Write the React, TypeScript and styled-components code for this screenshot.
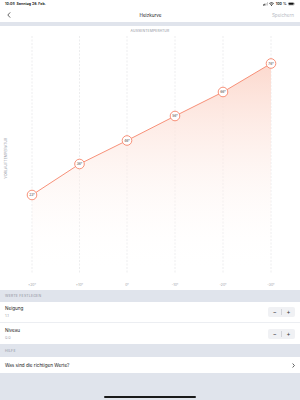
import React from 'react';
import styled, { createGlobalStyle } from 'styled-components';

const GlobalStyle = createGlobalStyle`
  html, body {
    margin: 0;
    padding: 0;
    background: #ffffff;
  }
  body {
    font-family: Inter, "Noto Sans", "Liberation Sans", sans-serif;
    color: #1f2024;
  }
`;

const GREY = '#e0e4ec';
const ACCENT = '#f6846a';

const Screen = styled.div`
  width: 300px;
  height: 400px;
  display: flex;
  flex-direction: column;
  background: #ffffff;
  overflow: hidden;
`;

const StatusBar = styled.div`
  height: 8px;
  padding: 0 5px;
  display: flex;
  align-items: center;
  justify-content: space-between;
  font-size: 3.6px;
  font-weight: 600;
  color: #111;
`;

const StatusRight = styled.div`
  display: flex;
  align-items: center;
  gap: 1.5px;
`;

const NavBar = styled.div`
  height: 14px;
  display: grid;
  grid-template-columns: 1fr auto 1fr;
  align-items: center;
  padding: 0 6px 0 7px;
`;

const NavTitle = styled.div`
  font-size: 4.6px;
  color: #222;
`;

const SaveButton = styled.div`
  justify-self: end;
  font-size: 4.6px;
  color: #b9bcc4;
`;

const Band = styled.div<{ $h: number }>`
  height: ${(p) => p.$h}px;
  background: ${GREY};
  flex-shrink: 0;
`;

const ChartPanel = styled.div`
  height: 264px;
  flex-shrink: 0;
`;

const SectionHeader = styled.div<{ $h: number }>`
  height: ${(p) => p.$h}px;
  background: ${GREY};
  display: flex;
  align-items: center;
  padding-left: 5px;
  font-size: 3.5px;
  letter-spacing: 0.2px;
  color: #8d919b;
`;

const ValueRow = styled.div<{ $divider?: boolean }>`
  height: 21px;
  display: flex;
  align-items: center;
  justify-content: space-between;
  padding: 0 5px;
  border-bottom: ${(p) => (p.$divider ? '0.5px solid #eceef2' : 'none')};
  box-sizing: border-box;
`;

const RowLabel = styled.div`
  display: flex;
  flex-direction: column;
  gap: 2px;
  .name {
    font-size: 4.6px;
    color: #222;
  }
  .value {
    font-size: 3.8px;
    color: #a3a6ae;
  }
`;

const Stepper = styled.div`
  width: 27px;
  height: 10px;
  border-radius: 2px;
  background: #f0f1f4;
  display: flex;
  align-items: center;
  font-size: 6px;
  color: #333;
  span {
    flex: 1;
    text-align: center;
    line-height: 10px;
  }
  i {
    width: 0.5px;
    height: 6px;
    background: #d2d4da;
  }
`;

const LinkRow = styled.div`
  height: 16px;
  display: flex;
  align-items: center;
  justify-content: space-between;
  padding: 0 5px;
  font-size: 4.6px;
  color: #222;
`;

const Footer = styled.div`
  flex: 1;
  background: ${GREY};
  display: flex;
  align-items: flex-end;
  justify-content: center;
  padding-bottom: 2px;
`;

const HomeIndicator = styled.div`
  width: 92px;
  height: 2px;
  border-radius: 1px;
  background: #1a1a1a;
`;

const xs = [32, 79.5, 127, 175, 223, 271];
const temps = [23, 36, 46, 56, 66, 76];
const ys = [169, 138, 114.5, 90, 66, 37.5];
const xLabels = ['+20°', '+10°', '0°', '-10°', '-20°', '-30°'];

const HeatCurve: React.FC = () => {
  const line = xs.map((x, i) => `${x},${ys[i]}`).join(' ');
  const area = `${xs[0]},247 ${line} ${xs[5]},247`;
  return (
    <svg width="300" height="264" viewBox="0 0 300 264">
      <defs>
        <linearGradient id="fill" x1="0" y1="0" x2="0" y2="1">
          <stop offset="0" stopColor="#fcd9ce" />
          <stop offset="1" stopColor="#ffffff" stopOpacity="0" />
        </linearGradient>
      </defs>
      <text x="150" y="6" textAnchor="middle" fontSize="3.4" fill="#8d919b" letterSpacing="0.15">
        AUSSENTEMPERATUR
      </text>
      {xs.map((x) => (
        <line key={x} x1={x} y1="10" x2={x} y2="247" stroke="#d9dadd" strokeWidth="0.5" strokeDasharray="2 1.5" />
      ))}
      <polygon points={area} fill="url(#fill)" />
      <polyline points={line} fill="none" stroke={ACCENT} strokeWidth="0.9" />
      {xs.map((x, i) => (
        <g key={x}>
          <circle cx={x} cy={ys[i]} r="4.8" fill="#ffffff" stroke={ACCENT} strokeWidth="0.9" />
          <text x={x} y={ys[i] + 1.2} textAnchor="middle" fontSize="3.3" fill="#444">
            {temps[i]}°
          </text>
        </g>
      ))}
      {xs.map((x, i) => (
        <text key={x} x={x} y="259.5" textAnchor="middle" fontSize="3.4" fill="#9a9da5">
          {xLabels[i]}
        </text>
      ))}
      <text
        x="6.5"
        y="132"
        textAnchor="middle"
        fontSize="3.4"
        fill="#8d919b"
        letterSpacing="0.15"
        transform="rotate(-90 6.5 132)"
      >
        VORLAUFTEMPERATUR
      </text>
    </svg>
  );
};

export default function App() {
  return (
    <>
      <GlobalStyle />
      <Screen>
        <StatusBar>
          <span>10:08&nbsp;&nbsp;Sonntag 26. Feb.</span>
          <StatusRight>
            <svg width="5" height="3.5" viewBox="0 0 10 7">
              <rect x="0" y="5" width="2" height="2" fill="#111" />
              <rect x="2.7" y="3.5" width="2" height="3.5" fill="#111" />
              <rect x="5.4" y="2" width="2" height="5" fill="#ccc" />
              <rect x="8" y="0" width="2" height="7" fill="#ccc" />
            </svg>
            <svg width="5" height="4" viewBox="0 0 10 8">
              <path d="M0.5 3 A7 7 0 0 1 9.5 3" stroke="#111" strokeWidth="1.5" fill="none" />
              <path d="M2.5 5 A4 4 0 0 1 7.5 5" stroke="#111" strokeWidth="1.5" fill="none" />
              <circle cx="5" cy="7" r="1" fill="#111" />
            </svg>
            <span>100 %</span>
            <svg width="7" height="3.6" viewBox="0 0 14 7">
              <rect x="0.5" y="0.5" width="11.5" height="6" rx="1.5" fill="none" stroke="#999" strokeWidth="0.8" />
              <rect x="1.5" y="1.5" width="9.5" height="4" rx="0.8" fill="#111" />
              <rect x="12.6" y="2.3" width="1" height="2.4" fill="#999" />
            </svg>
          </StatusRight>
        </StatusBar>
        <NavBar>
          <svg width="4" height="6" viewBox="0 0 4 6">
            <polyline points="3.2,0.4 0.8,3 3.2,5.6" fill="none" stroke="#222" strokeWidth="0.7" />
          </svg>
          <NavTitle>Heizkurve</NavTitle>
          <SaveButton>Speichern</SaveButton>
        </NavBar>
        <Band $h={4} />
        <ChartPanel>
          <HeatCurve />
        </ChartPanel>
        <SectionHeader $h={12}>WERTE FESTLEGEN</SectionHeader>
        <ValueRow $divider>
          <RowLabel>
            <span className="name">Neigung</span>
            <span className="value">1.1</span>
          </RowLabel>
          <Stepper>
            <span>−</span>
            <i />
            <span>+</span>
          </Stepper>
        </ValueRow>
        <ValueRow>
          <RowLabel>
            <span className="name">Niveau</span>
            <span className="value">0.0</span>
          </RowLabel>
          <Stepper>
            <span>−</span>
            <i />
            <span>+</span>
          </Stepper>
        </ValueRow>
        <SectionHeader $h={13}>HILFE</SectionHeader>
        <LinkRow>
          <span>Was sind die richtigen Werte?</span>
          <svg width="3" height="5" viewBox="0 0 3 5">
            <polyline points="0.6,0.5 2.4,2.5 0.6,4.5" fill="none" stroke="#222" strokeWidth="0.7" />
          </svg>
        </LinkRow>
        <Footer>
          <HomeIndicator />
        </Footer>
      </Screen>
    </>
  );
}
